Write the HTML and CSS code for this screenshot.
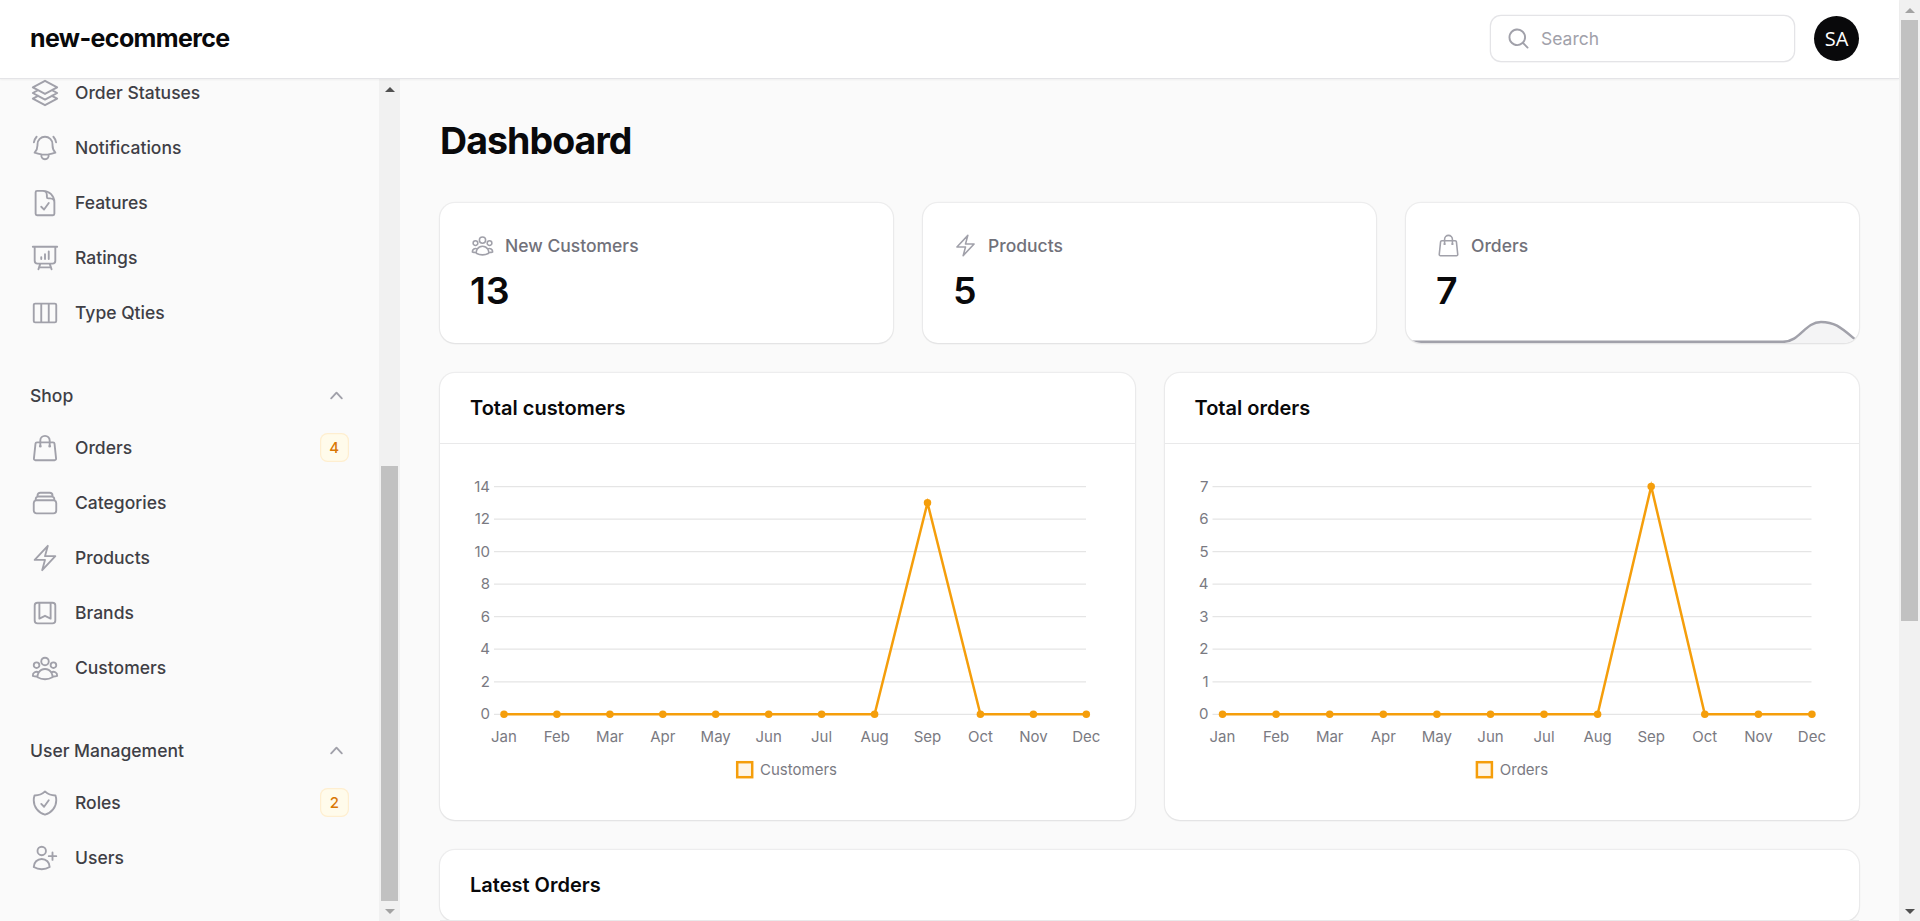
FILE: index.html
```html
<!DOCTYPE html>
<html lang="en">
<head>
    <meta charset="UTF-8">
    <meta name="viewport" content="width=device-width, initial-scale=1.0">
    <title>Dashboard - new-ecommerce</title>
    <link rel="stylesheet" href="styles.css">
</head>
<body>
    <svg class="sprite" xmlns="http://www.w3.org/2000/svg">
        <symbol id="i-stack" viewBox="0 0 24 24"><path d="M6.429 9.75 2.25 12l4.179 2.25m0-4.5 5.571 3 5.571-3m-11.142 0L2.25 7.5 12 2.25l9.75 5.25-4.179 2.25m0 0L21.75 12l-4.179 2.25m0 0 4.179 2.25L12 21.75 2.25 16.5l4.179-2.25m11.142 0-5.571 3-5.571-3"/></symbol>
        <symbol id="i-bell" viewBox="0 0 24 24"><path d="M14.857 17.082a23.848 23.848 0 0 0 5.454-1.31A8.967 8.967 0 0 1 18 9.75V9A6 6 0 0 0 6 9v.75a8.967 8.967 0 0 1-2.312 6.022c1.733.64 3.56 1.085 5.455 1.31m5.714 0a24.255 24.255 0 0 1-5.714 0m5.714 0a3 3 0 1 1-5.714 0M3.124 7.5A8.969 8.969 0 0 1 5.292 3m13.416 0a8.969 8.969 0 0 1 2.168 4.5"/></symbol>
        <symbol id="i-doc" viewBox="0 0 24 24"><path d="M10.125 2.25h-4.5c-.621 0-1.125.504-1.125 1.125v17.25c0 .621.504 1.125 1.125 1.125h12.75c.621 0 1.125-.504 1.125-1.125v-9M10.125 2.25h.375a9 9 0 0 1 9 9v.375M10.125 2.25A3.375 3.375 0 0 1 13.5 5.625v1.5c0 .621.504 1.125 1.125 1.125h1.5a3.375 3.375 0 0 1 3.375 3.375M9 15l2.25 2.25L15 12"/></symbol>
        <symbol id="i-board" viewBox="0 0 24 24"><path d="M3.75 3v11.25A2.25 2.25 0 0 0 6 16.5h2.25M3.75 3h-1.5m1.5 0h16.5m0 0h1.5m-1.5 0v11.25A2.25 2.25 0 0 1 18 16.5h-2.25m-7.5 0h7.5m-7.5 0-1 3m8.5-3 1 3m0 0 .5 1.5m-.5-1.5h-9.5m0 0-.5 1.5M9 11.25v1.5M12 9v3.75m3-6v6"/></symbol>
        <symbol id="i-columns" viewBox="0 0 24 24"><path d="M9 4.5v15m6-15v15m-10.875 0h15.75c.621 0 1.125-.504 1.125-1.125V5.625c0-.621-.504-1.125-1.125-1.125H4.125C3.504 4.5 3 5.004 3 5.625v12.75c0 .621.504 1.125 1.125 1.125Z"/></symbol>
        <symbol id="i-bag" viewBox="0 0 24 24"><path d="M15.75 10.5V6a3.75 3.75 0 1 0-7.5 0v4.5m11.356-1.993 1.263 12c.07.665-.45 1.243-1.119 1.243H4.25a1.125 1.125 0 0 1-1.12-1.243l1.264-12A1.125 1.125 0 0 1 5.513 7.5h12.974c.576 0 1.059.435 1.119 1.007ZM8.625 10.5a.375.375 0 1 1-.75 0 .375.375 0 0 1 .75 0Zm7.5 0a.375.375 0 1 1-.75 0 .375.375 0 0 1 .75 0Z"/></symbol>
        <symbol id="i-trays" viewBox="0 0 24 24"><path d="M6 6.878V6a2.25 2.25 0 0 1 2.25-2.25h7.5A2.25 2.25 0 0 1 18 6v.878m-12 0c.235-.083.487-.128.75-.128h10.5c.263 0 .515.045.75.128m-12 0A2.25 2.25 0 0 0 4.5 9v.878m13.5-3A2.25 2.25 0 0 1 19.5 9v.878m0 0a2.246 2.246 0 0 0-.75-.128H5.25c-.263 0-.515.045-.75.128m15 0A2.25 2.25 0 0 1 21 12v6a2.25 2.25 0 0 1-2.25 2.25H5.25A2.25 2.25 0 0 1 3 18v-6c0-.98.626-1.813 1.5-2.122"/></symbol>
        <symbol id="i-bolt" viewBox="0 0 24 24"><path d="m3.75 13.5 10.5-11.25L12 10.5h8.25L9.75 21.75 12 13.5H3.75Z"/></symbol>
        <symbol id="i-bookmark" viewBox="0 0 24 24"><path d="M16.5 3.75V16.5L12 14.25 7.5 16.5V3.75m9 0H18A2.25 2.25 0 0 1 20.25 6v12A2.25 2.25 0 0 1 18 20.25H6A2.25 2.25 0 0 1 3.75 18V6A2.25 2.25 0 0 1 6 3.75h1.5m9 0h-9"/></symbol>
        <symbol id="i-group" viewBox="0 0 24 24"><path d="M18 18.72a9.094 9.094 0 0 0 3.741-.479 3 3 0 0 0-4.682-2.72m.94 3.198.001.031c0 .225-.012.447-.037.666A11.944 11.944 0 0 1 12 21c-2.17 0-4.207-.576-5.963-1.584A6.062 6.062 0 0 1 6 18.719m12 0a5.971 5.971 0 0 0-.941-3.197m0 0A5.995 5.995 0 0 0 12 12.75a5.995 5.995 0 0 0-5.058 2.772m0 0a3 3 0 0 0-4.681 2.72 8.986 8.986 0 0 0 3.74.477m.94-3.197a5.971 5.971 0 0 0-.94 3.197M15 6.75a3 3 0 1 1-6 0 3 3 0 0 1 6 0Zm6 3a2.25 2.25 0 1 1-4.5 0 2.25 2.25 0 0 1 4.5 0Zm-13.5 0a2.25 2.25 0 1 1-4.5 0 2.25 2.25 0 0 1 4.5 0Z"/></symbol>
        <symbol id="i-shield" viewBox="0 0 24 24"><path d="M9 12.75 11.25 15 15 9.75m-3-7.036A11.959 11.959 0 0 1 3.598 6 11.99 11.99 0 0 0 3 9.749c0 5.592 3.824 10.29 9 11.623 5.176-1.332 9-6.03 9-11.622 0-1.31-.21-2.571-.598-3.751h-.152c-3.196 0-6.1-1.248-8.25-3.285Z"/></symbol>
        <symbol id="i-userplus" viewBox="0 0 24 24"><path d="M18 7.5v3m0 0v3m0-3h3m-3 0h-3m-2.25-4.125a3.375 3.375 0 1 1-6.75 0 3.375 3.375 0 0 1 6.75 0ZM3 19.235v-.11a6.375 6.375 0 0 1 12.75 0v.109A12.318 12.318 0 0 1 9.374 21c-2.331 0-4.512-.645-6.374-1.766Z"/></symbol>
        <symbol id="i-chevron" viewBox="0 0 20 20"><path fill-rule="evenodd" d="M14.77 12.79a.75.75 0 0 1-1.06-.02L10 8.832 6.29 12.77a.75.75 0 1 1-1.08-1.04l4.25-4.5a.75.75 0 0 1 1.08 0l4.25 4.5a.75.75 0 0 1-.02 1.06Z"/></symbol>
        <symbol id="i-search" viewBox="0 0 20 20"><path fill-rule="evenodd" d="M9 3.5a5.5 5.5 0 1 0 0 11 5.5 5.5 0 0 0 0-11ZM2 9a7 7 0 1 1 12.452 4.391l3.328 3.329a.75.75 0 1 1-1.06 1.06l-3.329-3.328A7 7 0 0 1 2 9Z"/></symbol>
    </svg>

    <div class="window">
        <div class="page">
            <header class="topbar">
                <div class="logo">new-ecommerce</div>
                <div class="search">
                    <svg class="search-icon"><use href="#i-search"/></svg>
                    <input type="text" placeholder="Search">
                </div>
                <div class="avatar">SA</div>
            </header>

            <div class="layout">
                <aside class="sidebar">
                    <nav class="nav">
                        <ul class="nav-list">
                            <li><a class="nav-item"><svg class="icon"><use href="#i-stack"/></svg>Order Statuses</a></li>
                            <li><a class="nav-item"><svg class="icon"><use href="#i-bell"/></svg>Notifications</a></li>
                            <li><a class="nav-item"><svg class="icon"><use href="#i-doc"/></svg>Features</a></li>
                            <li><a class="nav-item"><svg class="icon"><use href="#i-board"/></svg>Ratings</a></li>
                            <li><a class="nav-item"><svg class="icon"><use href="#i-columns"/></svg>Type Qties</a></li>
                        </ul>

                        <div class="nav-group">
                            <div class="group-label">Shop<svg class="chevron"><use href="#i-chevron"/></svg></div>
                            <ul class="nav-list">
                                <li><a class="nav-item"><svg class="icon"><use href="#i-bag"/></svg>Orders<span class="badge">4</span></a></li>
                                <li><a class="nav-item"><svg class="icon"><use href="#i-trays"/></svg>Categories</a></li>
                                <li><a class="nav-item"><svg class="icon"><use href="#i-bolt"/></svg>Products</a></li>
                                <li><a class="nav-item"><svg class="icon"><use href="#i-bookmark"/></svg>Brands</a></li>
                                <li><a class="nav-item"><svg class="icon"><use href="#i-group"/></svg>Customers</a></li>
                            </ul>
                        </div>

                        <div class="nav-group">
                            <div class="group-label">User Management<svg class="chevron"><use href="#i-chevron"/></svg></div>
                            <ul class="nav-list">
                                <li><a class="nav-item"><svg class="icon"><use href="#i-shield"/></svg>Roles<span class="badge">2</span></a></li>
                                <li><a class="nav-item"><svg class="icon"><use href="#i-userplus"/></svg>Users</a></li>
                            </ul>
                        </div>
                    </nav>
                    <div class="scrollbar">
                        <div class="arrow-up"></div>
                        <div class="track"></div>
                        <div class="thumb thumb-side"></div>
                        <div class="arrow-down off"></div>
                    </div>
                </aside>

                <main class="main">
                    <h1>Dashboard</h1>

                    <div class="stats">
                        <div class="card stat">
                            <div class="stat-label"><svg class="stat-icon"><use href="#i-group"/></svg>New Customers</div>
                            <div class="stat-value">13</div>
                        </div>
                        <div class="card stat">
                            <div class="stat-label"><svg class="stat-icon"><use href="#i-bolt"/></svg>Products</div>
                            <div class="stat-value">5</div>
                        </div>
                        <div class="card stat">
                            <div class="stat-label"><svg class="stat-icon"><use href="#i-bag"/></svg>Orders</div>
                            <div class="stat-value">7</div>
                            <svg class="spark" viewBox="1406 313 453 30">
                                <path class="spark-line" d="M1400 341.8H1783C1800 341.8 1805 322 1821 322C1837 322 1842 329 1862 345V350H1400Z"/>
                            </svg>
                        </div>
                    </div>

                    <div class="charts">
                        <section class="card">
                            <h2 class="card-head">Total customers</h2>
                            <svg class="chart" viewBox="440 444 694.5 376">
                                <path class="grid" d="M494 486.5H1086M494 519H1086M494 551.6H1086M494 584.1H1086M494 616.7H1086M494 649.2H1086M494 681.8H1086M494 714.3H1086"/>
                                <g class="tick tick-y">
                                    <text x="490" y="491.5">14</text>
                                    <text x="490" y="524">12</text>
                                    <text x="490" y="556.6">10</text>
                                    <text x="490" y="589.1">8</text>
                                    <text x="490" y="621.7">6</text>
                                    <text x="490" y="654.2">4</text>
                                    <text x="490" y="686.8">2</text>
                                    <text x="490" y="719.3">0</text>
                                </g>
                                <g class="tick tick-x">
                                    <text x="504" y="742">Jan</text>
                                    <text x="556.9" y="742">Feb</text>
                                    <text x="609.9" y="742">Mar</text>
                                    <text x="662.8" y="742">Apr</text>
                                    <text x="715.7" y="742">May</text>
                                    <text x="768.7" y="742">Jun</text>
                                    <text x="821.6" y="742">Jul</text>
                                    <text x="874.6" y="742">Aug</text>
                                    <text x="927.5" y="742">Sep</text>
                                    <text x="980.4" y="742">Oct</text>
                                    <text x="1033.4" y="742">Nov</text>
                                    <text x="1086.3" y="742">Dec</text>
                                </g>
                                <polyline class="line" points="504,714.3 874.6,714.3 927.5,502.8 980.4,714.3 1086.3,714.3"/>
                                <g class="dots">
                                    <circle cx="504" cy="714.3" r="3.75"/><circle cx="556.9" cy="714.3" r="3.75"/><circle cx="609.9" cy="714.3" r="3.75"/><circle cx="662.8" cy="714.3" r="3.75"/><circle cx="715.7" cy="714.3" r="3.75"/><circle cx="768.7" cy="714.3" r="3.75"/><circle cx="821.6" cy="714.3" r="3.75"/><circle cx="874.6" cy="714.3" r="3.75"/><circle cx="927.5" cy="502.8" r="3.75"/><circle cx="980.4" cy="714.3" r="3.75"/><circle cx="1033.4" cy="714.3" r="3.75"/><circle cx="1086.3" cy="714.3" r="3.75"/>
                                </g>
                                <rect class="legend-box" x="737.2" y="762.2" width="15" height="15"/>
                                <text class="tick" x="760" y="775.3">Customers</text>
                            </svg>
                        </section>

                        <section class="card">
                            <h2 class="card-head">Total orders</h2>
                            <svg class="chart" viewBox="1164.5 444 694.5 376">
                                <path class="grid" d="M1212 486.5H1811M1212 519H1811M1212 551.6H1811M1212 584.1H1811M1212 616.7H1811M1212 649.2H1811M1212 681.8H1811M1212 714.3H1811"/>
                                <g class="tick tick-y">
                                    <text x="1208" y="491.5">7</text>
                                    <text x="1208" y="524">6</text>
                                    <text x="1208" y="556.6">5</text>
                                    <text x="1208" y="589.1">4</text>
                                    <text x="1208" y="621.7">3</text>
                                    <text x="1208" y="654.2">2</text>
                                    <text x="1208" y="686.8">1</text>
                                    <text x="1208" y="719.3">0</text>
                                </g>
                                <g class="tick tick-x">
                                    <text x="1222" y="742">Jan</text>
                                    <text x="1275.6" y="742">Feb</text>
                                    <text x="1329.2" y="742">Mar</text>
                                    <text x="1382.8" y="742">Apr</text>
                                    <text x="1436.4" y="742">May</text>
                                    <text x="1490" y="742">Jun</text>
                                    <text x="1543.5" y="742">Jul</text>
                                    <text x="1597.1" y="742">Aug</text>
                                    <text x="1650.7" y="742">Sep</text>
                                    <text x="1704.3" y="742">Oct</text>
                                    <text x="1757.9" y="742">Nov</text>
                                    <text x="1811.4" y="742">Dec</text>
                                </g>
                                <polyline class="line" points="1222,714.3 1597.1,714.3 1650.7,486.5 1704.3,714.3 1811.4,714.3"/>
                                <g class="dots">
                                    <circle cx="1222" cy="714.3" r="3.75"/><circle cx="1275.6" cy="714.3" r="3.75"/><circle cx="1329.2" cy="714.3" r="3.75"/><circle cx="1382.8" cy="714.3" r="3.75"/><circle cx="1436.4" cy="714.3" r="3.75"/><circle cx="1490" cy="714.3" r="3.75"/><circle cx="1543.5" cy="714.3" r="3.75"/><circle cx="1597.1" cy="714.3" r="3.75"/><circle cx="1650.7" cy="486.5" r="3.75"/><circle cx="1704.3" cy="714.3" r="3.75"/><circle cx="1757.9" cy="714.3" r="3.75"/><circle cx="1811.4" cy="714.3" r="3.75"/>
                                </g>
                                <rect class="legend-box" x="1476.4" y="762.2" width="15" height="15"/>
                                <text class="tick" x="1499.3" y="775.3">Orders</text>
                            </svg>
                        </section>
                    </div>

                    <section class="card">
                        <h2 class="card-head">Latest Orders</h2>
                    </section>
                </main>
            </div>
        </div>

        <div class="scrollbar">
            <div class="arrow-up off"></div>
            <div class="thumb thumb-page"></div>
            <div class="track"></div>
            <div class="arrow-down"></div>
        </div>
    </div>
</body>
</html>
```

FILE: styles.css
```css
* {
    box-sizing: border-box;
}

html {
    height: 100%;
    overflow: hidden;
}

body {
    margin: 0;
    height: 100%;
    background-color: #fafafa;
    color: #09090b;
    font-family: Inter, "Liberation Sans", sans-serif;
    font-size: 17.5px;
    line-height: 25px;
    overflow: hidden;
}

.sprite {
    display: none;
}

.window {
    display: flex;
    height: 100%;
}

.page {
    flex: 1;
    min-width: 0;
    min-height: 0;
    display: flex;
    flex-direction: column;
}

/* top bar */
.topbar {
    flex: none;
    height: 79px;
    display: flex;
    align-items: center;
    padding: 0 40px 1px 30px;
    background-color: #ffffff;
    border-bottom: 1px solid #e4e4e7;
    box-shadow: 0 1px 2px rgba(0, 0, 0, 0.05);
    position: relative;
    z-index: 2;
}

.logo {
    font-size: 25px;
    font-weight: 700;
    letter-spacing: -0.625px;
    margin-right: auto;
}

.search {
    width: 303px;
    height: 45px;
    display: flex;
    align-items: center;
    gap: 10px;
    padding: 0 15px;
    margin-right: 20px;
    border-radius: 10px;
    background-color: #ffffff;
    box-shadow: 0 0 0 1.25px #e4e4e7, 0 1px 2px rgba(0, 0, 0, 0.05);
}

.search-icon {
    flex: none;
    width: 25px;
    height: 25px;
    fill: #a1a1aa;
}

.search input {
    flex: 1;
    min-width: 0;
    border: none;
    outline: none;
    padding: 0;
    background: none;
    font: inherit;
    color: #09090b;
}

.search input::placeholder {
    color: #a1a1aa;
    opacity: 1;
}

.avatar {
    flex: none;
    width: 45px;
    height: 45px;
    display: flex;
    align-items: center;
    justify-content: center;
    border-radius: 50%;
    background-color: #09090b;
    color: #ffffff;
    font-family: "Open Sans", sans-serif;
    font-size: 20px;
    font-weight: 500;
}

.layout {
    flex: 1;
    min-height: 0;
    display: flex;
}

/* sidebar */
.sidebar {
    flex: none;
    width: 400px;
    display: flex;
    min-height: 0;
}

.nav {
    flex: 1;
    min-width: 0;
    display: flex;
    flex-direction: column;
    gap: 47.5px;
    margin-top: -9px;
    padding: 0 20px;
    overflow: hidden;
}

.nav-group {
    display: flex;
    flex-direction: column;
    gap: 17.5px;
}

.nav-list {
    list-style: none;
    margin: 0;
    padding: 0;
    display: flex;
    flex-direction: column;
    gap: 10px;
}

.nav-item {
    height: 45px;
    display: flex;
    align-items: center;
    gap: 15px;
    padding: 0 10px;
    font-weight: 500;
    color: #3f3f46;
}

.icon {
    flex: none;
    width: 30px;
    height: 30px;
    fill: none;
    stroke: #a1a1aa;
    stroke-width: 1.5;
    stroke-linecap: round;
    stroke-linejoin: round;
}

.group-label {
    height: 25px;
    display: flex;
    align-items: center;
    justify-content: space-between;
    padding: 0 10px;
    font-weight: 500;
    color: #3f3f46;
}

.chevron {
    width: 25px;
    height: 25px;
    fill: #a1a1aa;
}

.badge {
    width: 29.5px;
    height: 29.5px;
    margin-left: auto;
    display: flex;
    align-items: center;
    justify-content: center;
    border-radius: 7.5px;
    background-color: #fffbeb;
    box-shadow: inset 0 0 0 1.25px #feeed0;
    color: #d97706;
    font-size: 15px;
    font-weight: 500;
}

/* drawn scrollbars */
.scrollbar {
    flex: none;
    width: 21px;
    display: flex;
    flex-direction: column;
    align-items: center;
    background-color: #f1f1f1;
}

.track {
    flex: 1;
}

.thumb {
    width: 17px;
    background-color: #c1c1c1;
}

.thumb-side {
    height: 435px;
}

.thumb-page {
    height: 601px;
}

.arrow-up,
.arrow-down {
    flex: none;
    width: 21px;
    height: 20px;
    display: flex;
    align-items: center;
    justify-content: center;
}

.arrow-up::after,
.arrow-down::after {
    content: "";
    border-left: 5px solid transparent;
    border-right: 5px solid transparent;
}

.arrow-up::after {
    border-bottom: 5px solid #505050;
}

.arrow-down::after {
    border-top: 5px solid #505050;
}

.arrow-up.off::after {
    border-bottom-color: #a3a3a3;
}

.arrow-down.off::after {
    border-top-color: #a3a3a3;
}

/* main */
.main {
    flex: 1;
    min-width: 0;
    padding: 39px 40px 40px;
    overflow: hidden;
}

h1 {
    margin: 0 0 40px;
    font-size: 37.5px;
    line-height: 45px;
    font-weight: 700;
    letter-spacing: -0.94px;
}

.card {
    background-color: #ffffff;
    border-radius: 15px;
    box-shadow: 0 0 0 1.25px rgba(9, 9, 11, 0.05), 0 1px 2px rgba(0, 0, 0, 0.05);
}

.stats {
    display: grid;
    grid-template-columns: repeat(3, 1fr);
    gap: 30px;
    margin-bottom: 30px;
}

.stat {
    height: 140px;
    padding: 30px;
    position: relative;
    overflow: hidden;
}

.stat-label {
    display: flex;
    align-items: center;
    gap: 10px;
    font-weight: 500;
    color: #71717a;
}

.stat-icon {
    flex: none;
    width: 25px;
    height: 25px;
    fill: none;
    stroke: #a1a1aa;
    stroke-width: 1.5;
    stroke-linecap: round;
    stroke-linejoin: round;
}

.stat-value {
    margin-top: 10px;
    font-size: 37.5px;
    line-height: 45px;
    font-weight: 600;
}

.spark {
    position: absolute;
    left: 0;
    bottom: 0;
    width: 100%;
    height: 30px;
}

.spark-line {
    fill: #f4f4f5;
    stroke: #a1a1aa;
    stroke-width: 2.5;
}

.charts {
    display: grid;
    grid-template-columns: repeat(2, 1fr);
    gap: 30px;
    margin-bottom: 30px;
}

.card-head {
    margin: 0;
    height: 71px;
    display: flex;
    align-items: center;
    padding: 0 30px;
    border-bottom: 1.25px solid #e9e9ea;
    font-size: 20px;
    font-weight: 600;
}

/* charts */
.chart {
    display: block;
    width: 100%;
    height: 376px;
}

.grid {
    fill: none;
    stroke: #e5e5e5;
    stroke-width: 1.25;
}

.tick {
    font-size: 15px;
    fill: #7a7a82;
}

.tick-y {
    text-anchor: end;
}

.tick-x {
    text-anchor: middle;
}

.line {
    fill: none;
    stroke: #f59e0b;
    stroke-width: 2.5;
    stroke-miterlimit: 10;
}

.dots {
    fill: #f59e0b;
}

.legend-box {
    fill: #fef5e7;
    stroke: #f59e0b;
    stroke-width: 2.5;
}
```
